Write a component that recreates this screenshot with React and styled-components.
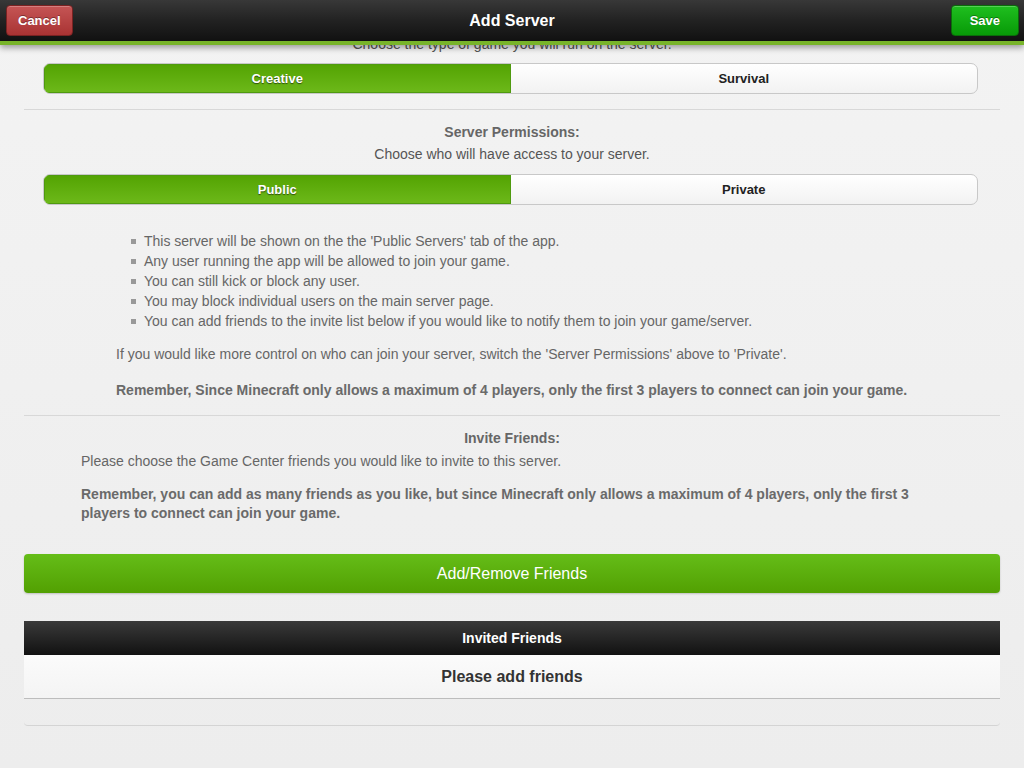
import React, { useState } from "react";
import styled, { createGlobalStyle } from "styled-components";

const GlobalStyle = createGlobalStyle`
  html, body {
    margin: 0;
    padding: 0;
    background: #f1f1f1;
    font-family: "Liberation Sans", Arial, Helvetica, sans-serif;
  }
  * { box-sizing: border-box; }
`;

const Screen = styled.div`
  width: 1024px;
  height: 768px;
  display: flex;
  flex-direction: column;
  overflow: hidden;
  background: linear-gradient(#f3f3f3, #ededed);
`;

const NavBar = styled.div`
  position: relative;
  z-index: 2;
  height: 45px;
  flex-shrink: 0;
  display: flex;
  align-items: center;
  justify-content: space-between;
  padding: 0 5px 4px 6px;
  background: linear-gradient(#383838, #222 50%, #111);
  border-bottom: 4px solid #78b42a;
  box-shadow: 0 3px 6px rgba(0, 0, 0, 0.35);
`;

const NavTitle = styled.div`
  position: absolute;
  left: 0;
  right: 0;
  top: 12px;
  text-align: center;
  color: #fff;
  font-size: 16px;
  font-weight: bold;
  pointer-events: none;
`;

const NavButton = styled.button`
  position: relative;
  z-index: 1;
  height: 31px;
  margin-top: 4px;
  padding: 0 ${(p) => (p.$wide ? 11 : 18)}px;
  border-radius: 4px;
  border: 1px solid ${(p) => (p.$tone === "red" ? "#7a2222" : "#0a6d0a")};
  background: ${(p) =>
    p.$tone === "red"
      ? "linear-gradient(#c55555, #a93333)"
      : "linear-gradient(#1fbf1f, #079a07)"};
  color: #fff;
  font-family: inherit;
  font-weight: bold;
  font-size: 13px;
  text-shadow: 0 -1px 0 rgba(0, 0, 0, 0.35);
  box-shadow: inset 0 1px 0 rgba(255, 255, 255, 0.25);
`;

const Scroller = styled.div`
  flex: 1;
  overflow: hidden;
`;

const Content = styled.div`
  margin-top: -12px;
  padding: 0 24px;
`;

const Section = styled.div`
  padding: 0 0 ${(p) => p.$bottom || 14}px;
  border-bottom: 1px solid #d8d8d8;
  margin-bottom: 11px;
`;

const Heading = styled.div`
  text-align: center;
  color: #666;
  font-size: 14px;
  font-weight: bold;
  line-height: 22px;
`;

const CenterText = styled.div`
  text-align: center;
  color: #555;
  font-size: 14px;
  line-height: 23px;
`;

const Segmented = styled.div`
  display: flex;
  margin: ${(p) => p.$top}px 22px 0 19px;
  height: 31px;
  border: 1px solid #c8c8c8;
  border-radius: 7px;
  overflow: hidden;
  background: linear-gradient(#ffffff, #f2f2f2);
`;

const Segment = styled.button`
  flex: 1;
  border: none;
  margin: 0;
  padding: 0;
  font-family: inherit;
  font-size: 13px;
  font-weight: bold;
  color: ${(p) => (p.$active ? "#fff" : "#222")};
  text-shadow: ${(p) => (p.$active ? "0 1px 1px rgba(0,0,0,0.55)" : "none")};
  background: ${(p) => (p.$active ? "linear-gradient(#53a302, #6db91a)" : "transparent")};
  box-shadow: ${(p) => (p.$active ? "inset 0 0 0 1px #4f9a0f" : "none")};
`;

const BulletList = styled.ul`
  margin: 26px 0 0 0;
  padding: 0 0 0 120px;
  list-style: none;
`;

const Bullet = styled.li`
  position: relative;
  color: #666;
  font-size: 14px;
  line-height: 20px;
  &::before {
    content: "";
    position: absolute;
    left: -13px;
    top: 8px;
    width: 5px;
    height: 5px;
    background: #999;
  }
`;

const Para = styled.p`
  margin: ${(p) => p.$top || 0}px 0 0 ${(p) => p.$indent}px;
  max-width: ${(p) => p.$max || 900}px;
  color: ${(p) => (p.$bold ? "#6a6a6a" : "#666")};
  font-size: 14px;
  font-weight: ${(p) => (p.$bold ? "bold" : "normal")};
  line-height: ${(p) => p.$lh || 19}px;
`;

const GreenButton = styled.button`
  display: block;
  width: 100%;
  height: 39px;
  margin-top: 31px;
  border: none;
  border-radius: 4px;
  background: linear-gradient(#65bd18, #52a002);
  color: #fff;
  font-family: inherit;
  font-size: 16px;
  box-shadow: 0 1px 2px rgba(0, 0, 0, 0.2);
`;

const Table = styled.div`
  margin-top: 28px;
  border-bottom: 1px solid #d4d4d4;
  border-radius: 0 0 4px 4px;
`;

const TableHead = styled.div`
  height: 34px;
  display: flex;
  align-items: center;
  justify-content: center;
  background: linear-gradient(#3a3a3a, #111);
  color: #fff;
  font-size: 14px;
  font-weight: bold;
`;

const TableRow = styled.div`
  height: 44px;
  display: flex;
  align-items: center;
  justify-content: center;
  background: linear-gradient(#fbfbfb, #f4f4f4);
  border-bottom: 1px solid #bdbdbd;
  color: #333;
  font-size: 16px;
  font-weight: bold;
`;

const TableFoot = styled.div`
  height: 26px;
`;

const bullets = [
  "This server will be shown on the the 'Public Servers' tab of the app.",
  "Any user running the app will be allowed to join your game.",
  "You can still kick or block any user.",
  "You may block individual users on the main server page.",
  "You can add friends to the invite list below if you would like to notify them to join your game/server.",
];

export default function App() {
  const [mode, setMode] = useState("creative");
  const [perm, setPerm] = useState("public");

  return (
    <Screen>
      <GlobalStyle />
      <NavBar>
        <NavButton $tone="red" $wide>Cancel</NavButton>
        <NavTitle>Add Server</NavTitle>
        <NavButton $tone="green">Save</NavButton>
      </NavBar>
      <Scroller>
        <Content>
          <Section $bottom={15}>
            <CenterText>Choose the type of game you will run on the server.</CenterText>
            <Segmented $top={7}>
              <Segment $active={mode === "creative"} onClick={() => setMode("creative")}>
                Creative
              </Segment>
              <Segment $active={mode === "survival"} onClick={() => setMode("survival")}>
                Survival
              </Segment>
            </Segmented>
          </Section>

          <Section>
            <Heading>Server Permissions:</Heading>
            <CenterText>Choose who will have access to your server.</CenterText>
            <Segmented $top={8}>
              <Segment $active={perm === "public"} onClick={() => setPerm("public")}>
                Public
              </Segment>
              <Segment $active={perm === "private"} onClick={() => setPerm("private")}>
                Private
              </Segment>
            </Segmented>
            <BulletList>
              {bullets.map((b) => (
                <Bullet key={b}>{b}</Bullet>
              ))}
            </BulletList>
            <Para $indent={92} $top={12} $lh={22}>
              If you would like more control on who can join your server, switch the 'Server
              Permissions' above to 'Private'.
            </Para>
            <Para $indent={92} $top={14} $lh={22} $bold>
              Remember, Since Minecraft only allows a maximum of 4 players, only the first 3
              players to connect can join your game.
            </Para>
          </Section>

          <Heading>Invite Friends:</Heading>
          <Para $indent={57} $top={1} $lh={23}>
            Please choose the Game Center friends you would like to invite to this server.
          </Para>
          <Para $indent={57} $top={12} $lh={19} $max={840} $bold>
            Remember, you can add as many friends as you like, but since Minecraft only allows a
            maximum of 4 players, only the first 3 players to connect can join your game.
          </Para>

          <GreenButton>Add/Remove Friends</GreenButton>

          <Table>
            <TableHead>Invited Friends</TableHead>
            <TableRow>Please add friends</TableRow>
            <TableFoot />
          </Table>
        </Content>
      </Scroller>
    </Screen>
  );
}
